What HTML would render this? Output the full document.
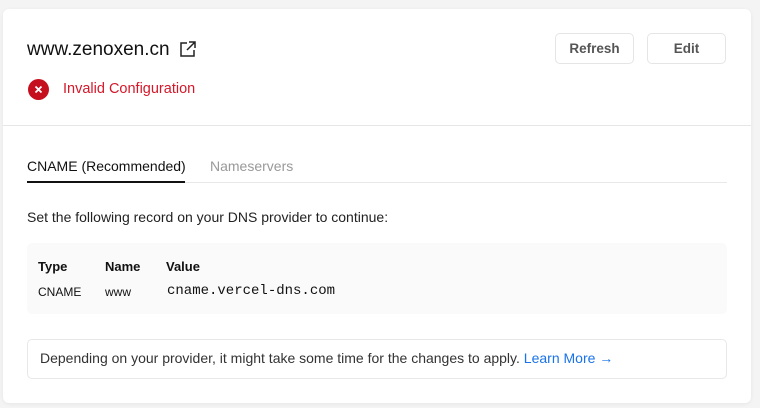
<!DOCTYPE html>
<html><head><meta charset="utf-8"><style>
*{margin:0;padding:0;box-sizing:border-box}
body{width:760px;height:408px;background:#f4f4f4;font-family:"Liberation Sans",sans-serif;position:relative;overflow:hidden;color:#111}
.card{position:absolute;left:3px;top:9px;width:748px;height:394px;background:#fff;border-radius:6px;box-shadow:0 1px 4px rgba(0,0,0,.06)}
.a{position:absolute;white-space:nowrap}
.btn{position:absolute;top:24px;width:79px;height:31px;border:1px solid #e5e5e5;border-radius:5px;font-size:13.5px;font-weight:bold;color:#555;text-align:center;line-height:29px}
</style></head><body>
<div class="card">
<div class="a" style="left:24px;top:30px;font-size:19px;color:#111">www.zenoxen.cn</div>
<svg class="a" style="left:176px;top:31px" width="18" height="18" viewBox="0 0 18 18" fill="none" stroke="#222" stroke-width="1.5"><path d="M8 3H2v13h13v-6"/><path d="M10 2h6v6M16 2L8 10"/></svg>
<div class="a" style="left:25px;top:70px;width:21px;height:21px;border-radius:50%;background:#c50f1f"></div>
<svg class="a" style="left:25px;top:70px" width="21" height="21" viewBox="0 0 21 21" stroke="#fff" stroke-width="1.8"><path d="M7.5 7.5l6 6M13.5 7.5l-6 6"/></svg>
<div class="a" style="left:60px;top:72px;font-size:14.5px;color:#d4182a">Invalid Configuration</div>
<div class="btn" style="left:552px">Refresh</div>
<div class="btn" style="left:644px">Edit</div>
<div class="a" style="left:0;top:116px;width:748px;height:1px;background:#e6e6e6"></div>
<div class="a" style="left:24px;top:149px;font-size:14px;color:#111">CNAME (Recommended)</div>
<div class="a" style="left:207px;top:149px;font-size:14px;color:#999">Nameservers</div>
<div class="a" style="left:24px;top:173px;width:700px;height:1px;background:#e8e8e8"></div>
<div class="a" style="left:24px;top:172px;width:158px;height:2px;background:#111"></div>
<div class="a" style="left:24px;top:200px;font-size:14px;color:#222">Set the following record on your DNS provider to continue:</div>
<div class="a" style="left:24px;top:234px;width:700px;height:71px;background:#fafafa;border-radius:5px"></div>
<div class="a" style="left:35px;top:250px;font-size:13px;font-weight:bold">Type</div>
<div class="a" style="left:102px;top:250px;font-size:13px;font-weight:bold">Name</div>
<div class="a" style="left:163px;top:250px;font-size:13px;font-weight:bold">Value</div>
<div class="a" style="left:35px;top:276px;font-size:12px">CNAME</div>
<div class="a" style="left:102px;top:276px;font-size:12px">www</div>
<div class="a" style="left:164px;top:274px;font-size:14px;font-family:'Liberation Mono',monospace">cname.vercel-dns.com</div>
<div class="a" style="left:24px;top:330px;width:700px;height:40px;border:1px solid #e8e8e8;border-radius:5px"></div>
<div class="a" style="left:37px;top:341px;font-size:14px;color:#333">Depending on your provider, it might take some time for the changes to apply. <span style="color:#1a73e8">Learn More →</span></div>
</div>
</body></html>
